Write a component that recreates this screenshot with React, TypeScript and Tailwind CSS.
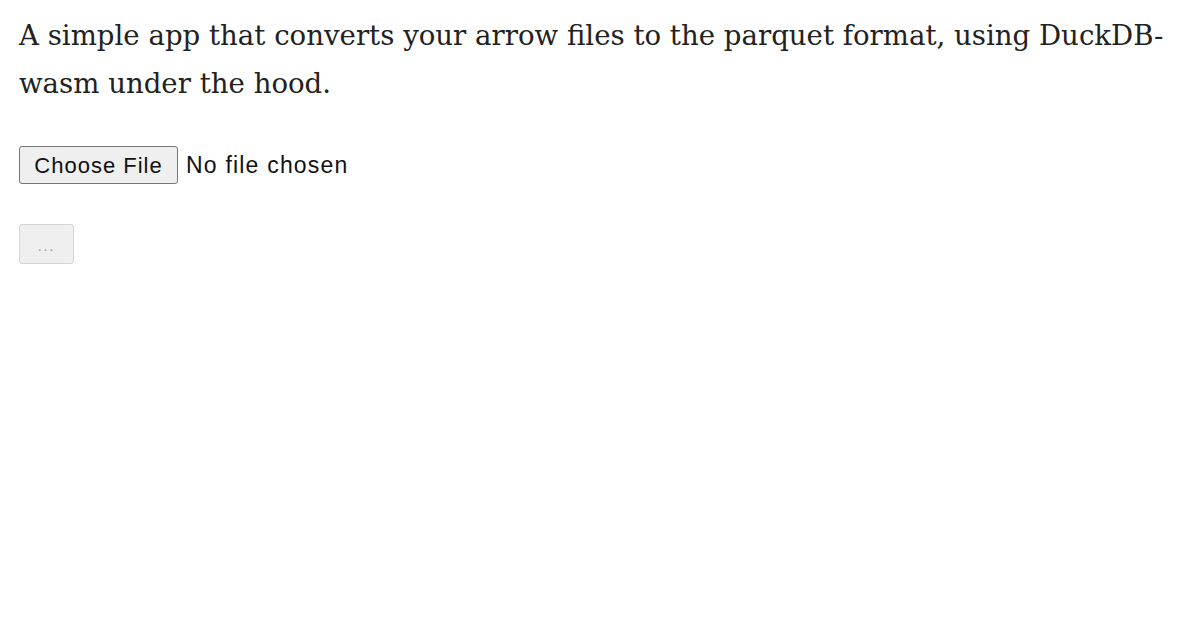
export default function App() {
  return (
    <div className="min-h-[630px] w-[1200px] bg-white px-[19px] pt-[12px]">
      <p className="font-['DejaVu_Serif',serif] text-[27.6px] leading-[48px] text-[#222]">
        A simple app that converts your arrow files to the parquet format, using DuckDB-
        <br />
        wasm under the hood.
      </p>

      {/* File picker */}
      <div className="mt-[38px] flex items-center font-['Liberation_Sans',Arial,sans-serif] text-[#111]">
        <div className="flex h-[38px] w-[159px] items-center justify-center rounded-[3px] border border-[#767676] bg-[#efefef] text-[22px] tracking-[1px]">
          Choose File
        </div>
        <span className="ml-[8px] text-[23px] tracking-[1.2px]">No file chosen</span>
      </div>

      {/* Disabled convert button */}
      <div className="mt-[40px] flex h-[40px] w-[55px] items-center justify-center rounded-[3px] border border-[#d4d4d4] bg-[#efefef] font-['Liberation_Sans',Arial,sans-serif] text-[14px] text-[#999]">
        <span className="pt-[4px] tracking-[2px]">...</span>
      </div>
    </div>
  )
}
